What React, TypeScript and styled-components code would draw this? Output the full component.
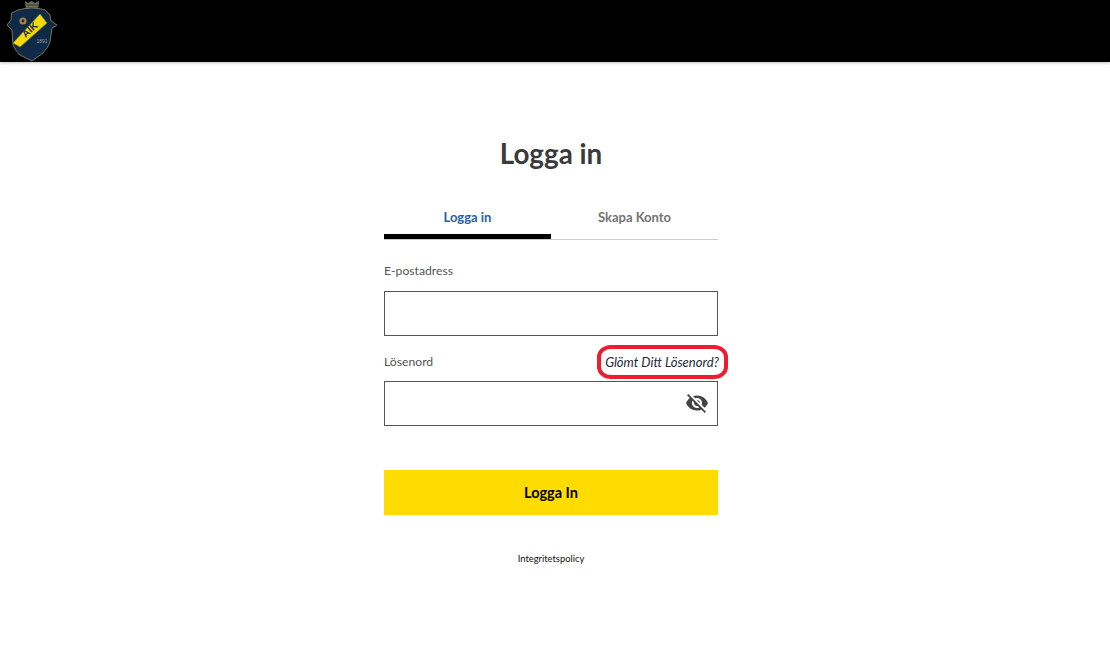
import React from "react";
import styled, { createGlobalStyle } from "styled-components";
import { MdVisibilityOff } from "react-icons/md";

const Global = createGlobalStyle`
  html, body { margin: 0; padding: 0; background: #fff; }
  body { font-family: Lato, "Liberation Sans", sans-serif; }
`;
const Page = styled.div`
  width: 1110px;
  height: 652px;
  overflow: hidden;
  display: flex;
  flex-direction: column;
`;
const Header = styled.header`
  height: 62px;
  flex: none;
  background: #000;
  box-shadow: 0 1px 3px rgba(0,0,0,.25);
  padding-left: 7px;
  display: flex;
  align-items: flex-start;
`;
const Main = styled.main`
  width: 1102px;
  display: flex;
  flex-direction: column;
  align-items: center;
`;
const Title = styled.h1`
  margin: 73px 0 0;
  height: 38px;
  font-size: 27.8px;
  line-height: 38px;
  font-weight: 700;
  color: #3a3a3a;
  text-align: center;
`;
const Form = styled.form`
  width: 334px;
  margin-top: 27px;
  display: flex;
  flex-direction: column;
`;
const Tabs = styled.div`
  display: flex;
  height: 39px;
  border-bottom: 1px solid #ccc;
`;
const Tab = styled.div<{ $active?: boolean }>`
  flex: 1;
  height: ${p => (p.$active ? "39.4px" : "39px")};
  box-sizing: border-box;
  text-align: center;
  font-size: 13px;
  line-height: 35px;
  font-weight: 700;
  color: ${p => (p.$active ? "#27609f" : "#737373")};
  border-bottom: ${p => (p.$active ? "5px solid #000" : "none")};
`;
const LabelRow = styled.div<{ $top: number }>`
  display: flex;
  justify-content: space-between;
  align-items: center;
  margin-top: ${p => p.$top}px;
  height: 18px;
`;
const Label = styled.label`
  font-size: 12.2px;
  color: #555;
`;
const Field = styled.div<{ $top: number }>`
  height: 44.5px;
  margin-top: ${p => p.$top}px;
  box-sizing: border-box;
  border: 1px solid #555;
  display: flex;
  align-items: center;
  justify-content: flex-end;
  padding-right: 8px;
  background: #fff;
  color: #444;
`;
const Forgot = styled.a`
  position: relative;
  font-size: 13px;
  font-style: italic;
  color: #1c2a3a;
  margin-right: -1px;
  white-space: nowrap;
  &::after {
    content: "";
    position: absolute;
    left: -8px;
    right: -9px;
    top: -9px;
    bottom: -9px;
    border: 4px solid #ed1c2e;
    border-radius: 14px / 12px;
  }
`;
const Submit = styled.button`
  margin-top: 44.5px;
  height: 44.5px;
  border: 0;
  background: #ffdc00;
  color: #000;
  font-family: inherit;
  font-size: 14.5px;
  font-weight: 700;
`;
const Policy = styled.a`
  margin-top: 37.5px;
  font-size: 9.4px;
  line-height: 14px;
  color: #111;
  text-align: center;
`;

const Logo = () => (
  <svg width="50" height="62" viewBox="0 0 50 62">
    <path d="M18 1l3 2 3.5-2 3.5 2 4-2-1 11H19z" fill="#6f6d5c" />
    <path d="M19 5h12M19 8h12" stroke="#3a392f" strokeWidth="1" />
    <path
      d="M4.7 13 L11 10 Q18 8 25 8 Q32 8 38 10 L43 15 L44 21 L50 25 L45 28 L43 42 Q41 48 36 53 L25 61 L13 55 Q8 50 6 45 L5 30 L0 25 L4 20 Z"
      fill="#0e2a47"
      stroke="#7d7452"
      strokeWidth="1"
    />
    <path d="M6 43 L33 14 L40 23 L13 47 Z" fill="#f5d90a" stroke="#8a7a40" strokeWidth=".6" />
    <circle cx="16" cy="21" r="3.6" fill="#a8803f" />
    <circle cx="16" cy="21" r="1.4" fill="#0e2a47" />
    <text
      x="23"
      y="33"
      fontFamily="Liberation Sans, sans-serif"
      fontSize="10"
      fontWeight="700"
      fill="#23304a"
      textAnchor="middle"
      transform="rotate(-41 23 30)"
    >
      AIK
    </text>
    <text x="35" y="43" fontFamily="Liberation Sans, sans-serif" fontSize="5" fill="#93a0aa" textAnchor="middle">
      1891
    </text>
  </svg>
);

export default function App() {
  return (
    <Page>
      <Global />
      <Header><Logo /></Header>
      <Main>
        <Title>Logga in</Title>
        <Form>
          <Tabs>
            <Tab $active>Logga in</Tab>
            <Tab>Skapa Konto</Tab>
          </Tabs>
          <LabelRow $top={21}><Label>E-postadress</Label></LabelRow>
          <Field $top={12} />
          <LabelRow $top={17}>
            <Label>Lösenord</Label>
            <Forgot>Glömt Ditt Lösenord?</Forgot>
          </LabelRow>
          <Field $top={10.5}><MdVisibilityOff size={24} /></Field>
          <Submit type="button">Logga In</Submit>
          <Policy>Integritetspolicy</Policy>
        </Form>
      </Main>
    </Page>
  );
}
